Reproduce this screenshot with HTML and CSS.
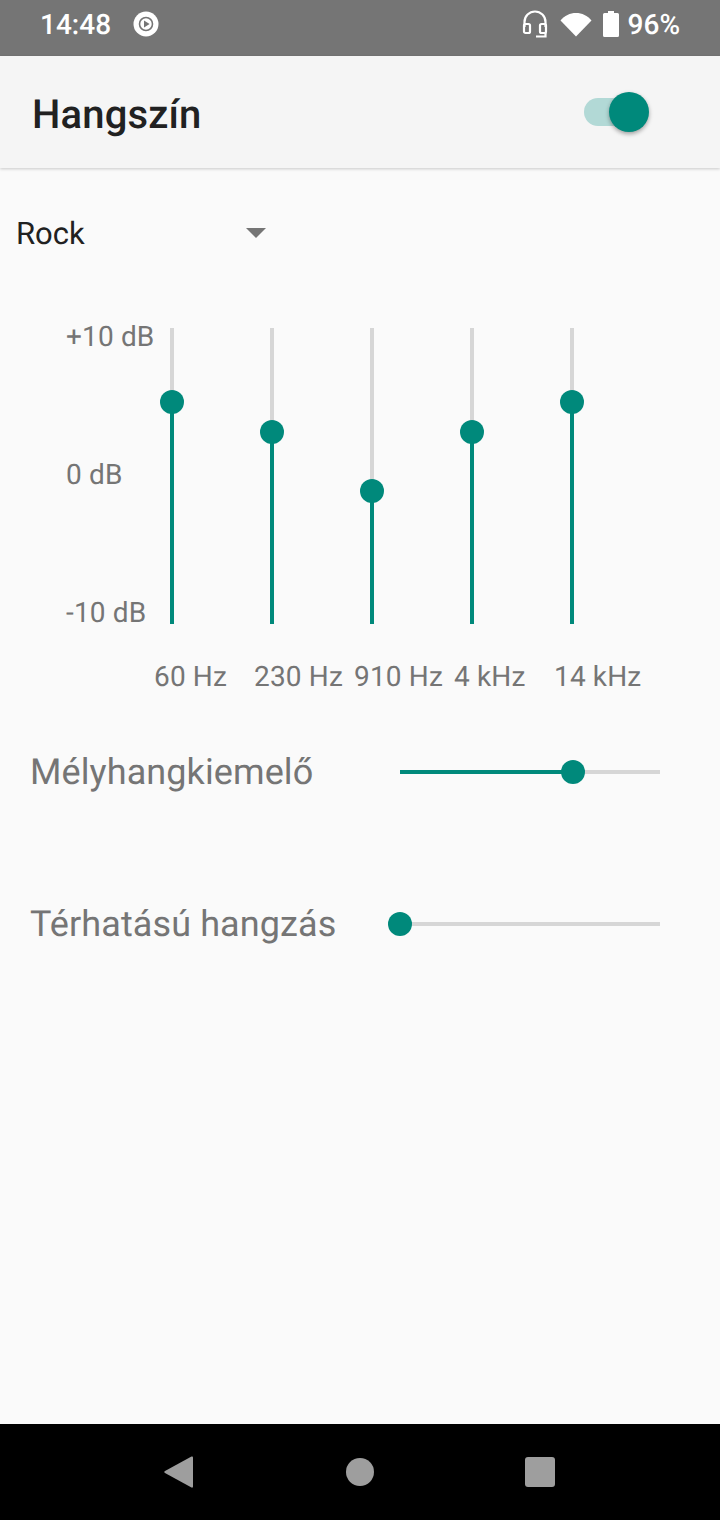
FILE: index.html
```html
<!DOCTYPE html>
<html lang="hu">

<head>
  <meta charset="UTF-8">
  <meta name="viewport" content="width=device-width, initial-scale=1.0">
  <title>Hangszín</title>
  <link rel="stylesheet" href="styles.css">
</head>

<body>
  <!-- status bar -->
  <div class="status">
    <span class="time">14:48</span>
    <svg class="play" width="26" height="26" viewBox="0 0 26 26">
      <circle cx="13" cy="13" r="12.5" fill="#fff" />
      <circle cx="13" cy="13" r="6.5" fill="none" stroke="#757575" stroke-width="1.6" />
      <path d="M11 9.4v7.2l5.6-3.6z" fill="#757575" />
    </svg>
    <div class="status-right">
      <svg width="26" height="28" viewBox="0 0 26 28">
        <path d="M2.5 17V12a10.5 10.5 0 0 1 21 0v5" fill="none" stroke="#fff" stroke-width="2.2" />
        <rect x="2" y="14" width="6" height="9" rx="1.5" fill="none" stroke="#fff" stroke-width="2.2" />
        <rect x="18" y="14" width="6" height="9" rx="1.5" fill="none" stroke="#fff" stroke-width="2.2" />
        <path d="M14 26.5h9.5V23" fill="none" stroke="#fff" stroke-width="2.2" />
      </svg>
      <svg class="wifi" width="32" height="25" viewBox="0 0 32 25">
        <path d="M0.5 8.5C4.500 3.500 10 1 16 1s11.500 2.500 15.500 7.500L16 24.500z" fill="#fff" />
      </svg>
      <svg class="battery" width="16" height="26" viewBox="0 0 16 26">
        <path d="M5 0h6v2h3.500q1.500 0 1.500 1.500V24.500q0 1.500-1.500 1.500H1.500Q0 26 0 24.500V3.500Q0 2 1.500 2H5z" fill="#fff" />
      </svg>
      <span class="pct">96%</span>
    </div>
  </div>

  <!-- title -->
  <div class="appbar">
    <h1>Hangszín</h1>
    <div class="switch">
      <div class="switch-track"></div>
      <div class="switch-thumb"></div>
    </div>
  </div>

  <div class="content">
    <!-- preset -->
    <div class="preset">
      <span>Rock</span>
      <div class="arrow"></div>
    </div>

    <!-- equalizer -->
    <div class="eq">
      <div class="db">
        <span>+10 dB</span>
        <span>0 dB</span>
        <span>-10 dB</span>
      </div>
      <div class="band">
        <div class="band-rest" style="height: 74px"></div>
        <div class="band-fill"></div>
        <div class="band-thumb" style="top: 62px"></div>
      </div>
      <div class="band">
        <div class="band-rest" style="height: 104px"></div>
        <div class="band-fill"></div>
        <div class="band-thumb" style="top: 92px"></div>
      </div>
      <div class="band">
        <div class="band-rest" style="height: 163px"></div>
        <div class="band-fill"></div>
        <div class="band-thumb" style="top: 151px"></div>
      </div>
      <div class="band">
        <div class="band-rest" style="height: 104px"></div>
        <div class="band-fill"></div>
        <div class="band-thumb" style="top: 92px"></div>
      </div>
      <div class="band">
        <div class="band-rest" style="height: 74px"></div>
        <div class="band-fill"></div>
        <div class="band-thumb" style="top: 62px"></div>
      </div>
    </div>
    <div class="freqs">
      <span>60 Hz</span>
      <span>230 Hz</span>
      <span>910 Hz</span>
      <span>4 kHz</span>
      <span>14 kHz</span>
    </div>

    <!-- effects -->
    <div class="effect bass">
      <span>Mélyhangkiemelő</span>
      <div class="hslider">
        <div class="hslider-fill" style="width: 173px"></div>
        <div class="hslider-thumb" style="left: 161px"></div>
      </div>
    </div>
    <div class="effect surround">
      <span>Térhatású hangzás</span>
      <div class="hslider">
        <div class="hslider-thumb" style="left: -12px"></div>
      </div>
    </div>
  </div>

  <!-- nav bar -->
  <div class="navbar">
    <svg width="30" height="32" viewBox="0 0 30 32">
      <path d="M27.500 0.500q1.500-.5 1.500 1V30.500q0 1.500-1.500 1L1 17q-1.500-1 0-2z" fill="#9e9e9e" />
    </svg>
    <div class="nav-home"></div>
    <div class="nav-recent"></div>
  </div>
</body>

</html>
```

FILE: styles.css
```css
* {
  margin: 0;
  padding: 0;
  box-sizing: border-box;
}

body {
  width: 720px;
  height: 1520px;
  display: flex;
  flex-direction: column;
  background-color: #fafafa;
  font-family: Roboto, sans-serif;
  text-rendering: geometricPrecision;
  overflow: hidden;
}

.status {
  height: 56px;
  padding: 0 40px 8px 40px;
  display: flex;
  align-items: center;
  background-color: #757575;
  color: #fff;
  font-size: 28px;
  font-weight: 500;
}

.play {
  margin-left: 22px;
}

.status-right {
  margin-left: auto;
  display: flex;
  align-items: center;
}

.wifi {
  margin-left: 12px;
}

.battery {
  margin-left: 11px;
}

.pct {
  margin-left: 9px;
}

.appbar {
  position: relative;
  height: 112px;
  padding: 0 32px;
  display: flex;
  align-items: center;
  justify-content: space-between;
  background-color: #f5f5f5;
  box-shadow: 0 1px 3px rgba(0, 0, 0, .2);
}

h1 {
  margin-top: 5px;
  font-size: 40px;
  font-weight: 500;
  letter-spacing: .15px;
  color: #212121;
}

.switch {
  position: relative;
  width: 68px;
  height: 40px;
  margin-right: 38px;
}

.switch-track {
  position: absolute;
  top: 6px;
  left: 2px;
  width: 56px;
  height: 28px;
  border-radius: 14px;
  background-color: #b2d9d6;
}

.switch-thumb {
  position: absolute;
  top: 0;
  left: 27px;
  width: 40px;
  height: 40px;
  border-radius: 50%;
  background-color: #00897b;
  box-shadow: 0 2px 4px rgba(0, 0, 0, .35);
}

.content {
  flex: 1;
}

.preset {
  height: 130px;
  padding-left: 16px;
  display: flex;
  align-items: center;
  font-size: 31px;
  color: #212121;
}

.arrow {
  margin-left: 161px;
  width: 0;
  height: 0;
  border-left: 10px solid transparent;
  border-right: 10px solid transparent;
  border-top: 10px solid #757575;
}

.eq {
  margin-top: 30px;
  height: 296px;
  padding-left: 66px;
  display: flex;
  gap: 96px;
}

.db {
  width: 104px;
  margin-right: -96px;
  padding: 9px 0 11px;
  display: flex;
  flex-direction: column;
  justify-content: space-between;
  font-size: 28px;
  letter-spacing: .15px;
  color: #757575;
}

.db span {
  height: 0;
  line-height: 0;
}

.band {
  position: relative;
  width: 4px;
  display: flex;
  flex-direction: column;
}

.band-rest {
  background-color: #d6d6d6;
}

.band-fill {
  flex: 1;
  background-color: #00897b;
}

.band-thumb {
  position: absolute;
  left: -10px;
  width: 24px;
  height: 24px;
  border-radius: 50%;
  background-color: #00897b;
}

.freqs {
  margin-top: 36px;
  padding-left: 154px;
  display: flex;
  font-size: 28px;
  letter-spacing: .15px;
  line-height: 34px;
  color: #757575;
}

.freqs span {
  width: 100px;
  white-space: nowrap;
}

.effect {
  display: flex;
  align-items: center;
  justify-content: space-between;
  padding: 0 60px 0 30px;
  height: 44px;
  font-size: 36px;
  letter-spacing: .1px;
  color: #757575;
}

.bass {
  margin-top: 56px;
}

.surround {
  margin-top: 108px;
}

.hslider {
  position: relative;
  width: 260px;
  height: 4px;
  background-color: #d6d6d6;
}

.hslider-fill {
  height: 4px;
  background-color: #00897b;
}

.hslider-thumb {
  position: absolute;
  top: -10px;
  width: 24px;
  height: 24px;
  border-radius: 50%;
  background-color: #00897b;
}

.navbar {
  height: 96px;
  padding: 0 165px 0 164px;
  display: flex;
  align-items: center;
  justify-content: space-between;
  background-color: #000;
}

.nav-home {
  width: 28px;
  height: 28px;
  border-radius: 50%;
  background-color: #9e9e9e;
}

.nav-recent {
  width: 30px;
  height: 30px;
  border-radius: 3px;
  background-color: #9e9e9e;
}
```
